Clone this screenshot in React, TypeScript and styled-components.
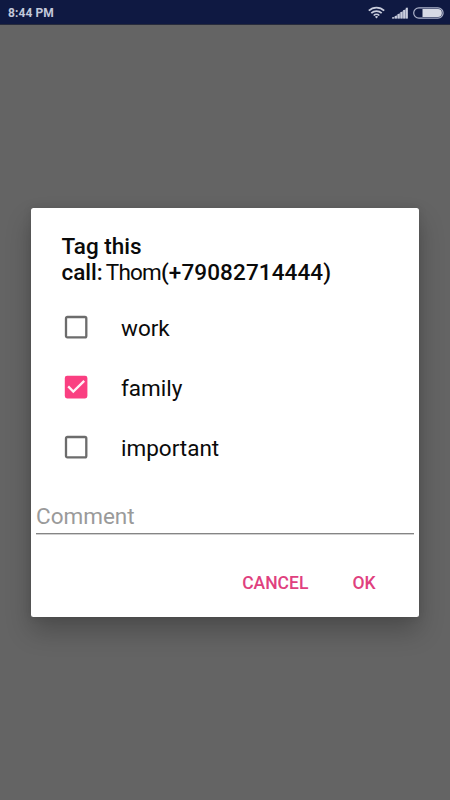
import React, { useState } from "react";
import styled, { createGlobalStyle } from "styled-components";

const GlobalStyle = createGlobalStyle`
  * { box-sizing: border-box; }
  body { margin: 0; background: #646464; font-family: Roboto, sans-serif; }
`;

const Screen = styled.div`
  display: flex;
  flex-direction: column;
  width: 450px;
  height: 800px;
  background: #646464;
  overflow: hidden;
`;

const StatusBar = styled.header`
  display: flex;
  align-items: center;
  justify-content: space-between;
  flex: none;
  height: 25px;
  padding: 1px 6px 0 8px;
  background: #0f1942;
  color: #c3c8da;
  border-bottom: 1px solid #272b3c;
`;

const Clock = styled.time`
  padding-top: 2px;
  font-size: 12px;
  font-weight: 700;
  line-height: 21px;
  letter-spacing: 0.1px;
`;

const StatusIcons = styled.div`
  display: flex;
  align-items: center;
  gap: 5px;
`;

const Dialog = styled.section`
  display: flex;
  flex-direction: column;
  width: 388px;
  height: 409px;
  margin: 183px 0 0 31px;
  padding: 25px 5px 0;
  background: #fff;
  border-radius: 2.5px;
  box-shadow: 0 14px 26px rgba(0, 0, 0, 0.24), 0 0 8px rgba(0, 0, 0, 0.1);
`;

const Title = styled.h1`
  margin: 0 0 12px 25.5px;
  font-size: 22.5px;
  font-weight: 500;
  line-height: 26px;
  color: #0a0a0a;
  white-space: nowrap;
`;

const TitleLine = styled.span`
  display: block;
`;

const CallerName = styled.span`
  margin-left: 3px;
  font-weight: 400;
  letter-spacing: -0.8px;
`;

const PhoneNumber = styled.span`
  letter-spacing: 0.1px;
`;

const TagRow = styled.label`
  display: flex;
  align-items: center;
  gap: 33px;
  height: 60px;
  padding-left: 28px;
`;

const TagBox = styled.svg`
  display: block;
  flex: none;
`;

const HiddenInput = styled.input`
  display: none;
`;

const TagLabel = styled.span`
  padding-top: 1px;
  font-size: 22.5px;
  line-height: 26px;
  color: #0a0a0a;
`;

const CommentInput = styled.input`
  width: 378px;
  height: 37px;
  margin-top: 20px;
  padding: 1px 0 0;
  border: 0;
  border-bottom: 1px solid #858585;
  outline: 0;
  background: transparent;
  font: 400 22.5px/30px Roboto, sans-serif;
  color: #222;
  box-shadow: 0 1px 0 #d0d0d0;
  &::placeholder { color: #9a9a9a; opacity: 1; }
`;

const Actions = styled.footer`
  display: flex;
  justify-content: flex-end;
  gap: 44px;
  margin-top: 38px;
  padding-right: 38.5px;
`;

const ActionButton = styled.button`
  padding: 0;
  border: 0;
  background: none;
  font: 500 17.5px/22px Roboto, sans-serif;
  color: #e0407e;
`;

const WifiIcon = () => (
  <svg width="17" height="13" viewBox="0 0 17 13" fill="none" stroke="#c9cddd" strokeWidth="1.7">
    <path d="M0.8 4.7a11 11 0 0 1 15.4 0M3.3 7.2a7.4 7.4 0 0 1 10.4 0M5.7 9.5a4 4 0 0 1 5.6 0" />
    <path d="M6.9 10.8 8.5 12.6 10.1 10.8a2.4 2.4 0 0 0-3.2 0z" fill="#c9cddd" stroke="none" />
  </svg>
);

const SignalIcon = () => (
  <svg width="18" height="12" viewBox="-1.5 0 18 12">
    <path d="M0 11.4 16.2.4V11.4z" fill="#6c7391" />
    <path
      d="M.6 10.2h2v1.2h-2zM3.4 9h2v2.4h-2zM6.2 7h2v4.4h-2zM9 5h2v6.4H9zM11.7 3h2v8.4h-2zM14.3.8h2v10.6h-2z"
      fill="#c9cddd"
    />
  </svg>
);

const BatteryIcon = () => (
  <svg width="31" height="12" viewBox="0 0 31 12">
    <rect x=".7" y=".8" width="29.4" height="10.4" rx="5.2" fill="none" stroke="#aeb4cb" strokeWidth="1.2" />
    <path d="M9.5 2.1H25a3.9 3.9 0 0 1 0 7.8H9.5z" fill="#d7dae5" />
  </svg>
);

const TagCheckbox = ({ checked }: { checked: boolean }) => (
  <TagBox width="24" height="24" viewBox="0 0 24 24">
    {checked ? (
      <>
        <rect x=".8" y=".8" width="22.6" height="22.6" rx="2.3" fill="#fa3f81" />
        <path d="M4.2 11.4 9.3 16.6 20.2 5.9" fill="none" stroke="#fff1f6" strokeWidth="2.3" />
      </>
    ) : (
      <rect x="2" y="2" width="20.3" height="20.3" rx="1.4" fill="none" stroke="#6c6c6c" strokeWidth="2.3" />
    )}
  </TagBox>
);

export default function App() {
  const [tags, setTags] = useState([
    { name: "work", checked: false },
    { name: "family", checked: true },
    { name: "important", checked: false },
  ]);
  const toggle = (name: string) =>
    setTags(tags.map((t) => (t.name === name ? { ...t, checked: !t.checked } : t)));

  return (
    <Screen>
      <GlobalStyle />
      <StatusBar>
        <Clock>8:44 PM</Clock>
        <StatusIcons>
          <WifiIcon />
          <SignalIcon />
          <BatteryIcon />
        </StatusIcons>
      </StatusBar>
      <Dialog role="dialog">
        <Title>
          <TitleLine>Tag this</TitleLine>
          <TitleLine>
            call:<CallerName>Thom</CallerName>
            <PhoneNumber>(+79082714444)</PhoneNumber>
          </TitleLine>
        </Title>
        {tags.map((t) => (
          <TagRow key={t.name}>
            <HiddenInput type="checkbox" checked={t.checked} onChange={() => toggle(t.name)} />
            <TagCheckbox checked={t.checked} />
            <TagLabel>{t.name}</TagLabel>
          </TagRow>
        ))}
        <CommentInput placeholder="Comment" />
        <Actions>
          <ActionButton>CANCEL</ActionButton>
          <ActionButton>OK</ActionButton>
        </Actions>
      </Dialog>
    </Screen>
  );
}
